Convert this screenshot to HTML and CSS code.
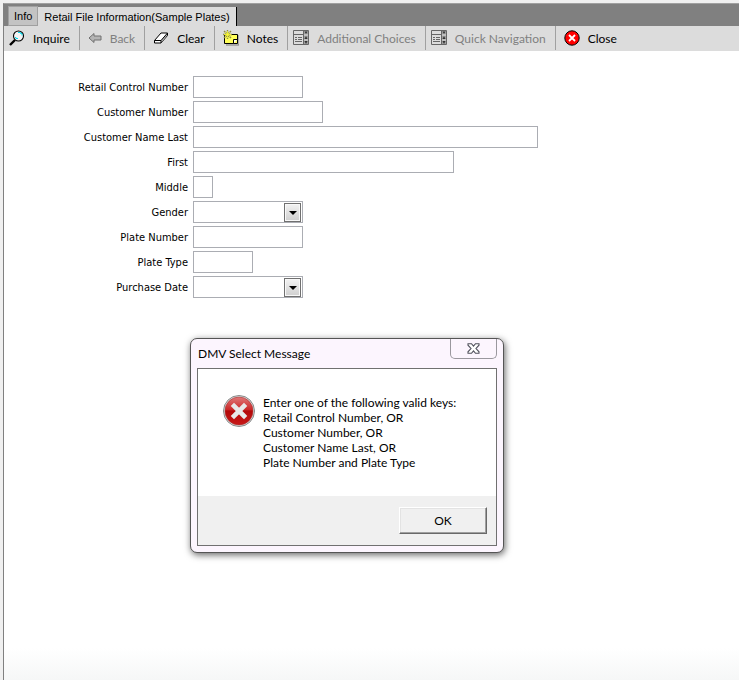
FILE: index.html
```
<!DOCTYPE html>
<html lang="en">
<head>
    <meta charset="UTF-8">
    <meta name="viewport" content="width=device-width, initial-scale=1.0">
    <title>Retail File Information</title>
    <link rel="stylesheet" href="styles.css">
</head>
<body>
    <div class="window">
        <div class="tabs" role="tablist">
            <button class="tab" type="button" role="tab">Info</button>
            <button class="tab tab-active" type="button" role="tab" aria-selected="true">Retail File Information(Sample Plates)</button>
        </div>

        <div class="toolbar">
            <button class="tool tool-inquire" type="button">
                <svg width="16" height="16" viewBox="0 0 16 16">
                    <path d="M6 10L1 15" stroke="#000" stroke-width="2.4"/>
                    <circle cx="9.5" cy="6" r="5" fill="#f4f4f4" stroke="#000" stroke-width="1.1"/>
                    <path d="M9 2.500h2.500v1H13v2M6 7.500h1v1h2" fill="none" stroke="#00dcf0"/>
                </svg>
                Inquire
            </button>
            <button class="tool tool-back" type="button" disabled>
                <svg width="14" height="16" viewBox="0 0 14 16">
                    <path d="M1 8l5-4.5V6h7v4H6v2.500z" fill="#b4b4b4" stroke="#707070"/>
                </svg>
                Back
            </button>
            <button class="tool" type="button">
                <svg width="16" height="16" viewBox="0 0 16 16">
                    <path d="M1.500 10.500L8 3h6.500v2.500L8 13H1.500z" fill="#fff" stroke="#000"/>
                    <path d="M8 10.500L14 3.500v2L8 13z" fill="#aaa"/>
                    <path d="M1.500 10.500H8L14.500 3M8 10.500V13" fill="none" stroke="#000"/>
                </svg>
                Clear
            </button>
            <button class="tool" type="button">
                <svg width="16" height="16" viewBox="0 0 16 16">
                    <path d="M3 15h13V5" fill="none" stroke="#777"/>
                    <path d="M1.500 4.500h13v9h-13z" fill="#ffff58" stroke="#000"/>
                    <path d="M10.500 13.500v-4h4" fill="#fff" stroke="#000"/>
                    <path d="M4.500 0v9M0 4.500h9M1 1l7 7M8 1L1 8" stroke="#8d8d48" stroke-width="1.4"/>
                    <path d="M4.500 1v7M1 4.500h7M2 2l5 5M7 2L2 7" stroke="#ff3" stroke-width=".8"/>
                </svg>
                Notes
            </button>
            <button class="tool tool-list" type="button" disabled>
                <svg width="16" height="16" viewBox="0 0 16 16">
                    <path d="M.5 .5h15v14H.5zM10.500 0v15M.5 4.500h10M2 7.500h2M5 7.500h4M2 9.500h2M5 9.500h4M2 11.500h7" fill="none" stroke="#666"/>
                    <path d="M11 1h4v13h-4z" fill="#a0a0a0"/>
                    <path d="M11 5h4M11 10h4" stroke="#ddd"/>
                    <path d="M11.500 1.500h3L13 4zM11.500 9h3L13 6zM11.500 11h3L13 14z" fill="#333"/>
                </svg>
                Additional Choices
            </button>
            <button class="tool tool-list" type="button" disabled>
                <svg width="16" height="16" viewBox="0 0 16 16">
                    <path d="M.5 .5h15v14H.5zM10.500 0v15M.5 4.500h10M2 7.500h2M5 7.500h4M2 9.500h2M5 9.500h4M2 11.500h7" fill="none" stroke="#666"/>
                    <path d="M11 1h4v13h-4z" fill="#a0a0a0"/>
                    <path d="M11 5h4M11 10h4" stroke="#ddd"/>
                    <path d="M11.500 1.500h3L13 4zM11.500 9h3L13 6zM11.500 11h3L13 14z" fill="#333"/>
                </svg>
                Quick Navigation
            </button>
            <button class="tool tool-close" type="button">
                <svg width="16" height="16" viewBox="0 0 16 16">
                    <circle cx="8" cy="8" r="7.200" fill="#f00" stroke="#000"/>
                    <path d="M5 5l6 6M11 5l-6 6" stroke="#fff" stroke-width="1.800"/>
                </svg>
                Close
            </button>
        </div>

        <form class="search-form">
            <div class="row">
                <label for="control-number">Retail Control Number</label>
                <input id="control-number" class="field" type="text">
            </div>
            <div class="row">
                <label for="customer-number">Customer Number</label>
                <input id="customer-number" class="field field-customer" type="text">
            </div>
            <div class="row">
                <label for="last-name">Customer Name Last</label>
                <input id="last-name" class="field field-last" type="text">
            </div>
            <div class="row">
                <label for="first-name">First</label>
                <input id="first-name" class="field field-first" type="text">
            </div>
            <div class="row">
                <label for="middle">Middle</label>
                <input id="middle" class="field field-middle" type="text" maxlength="1">
            </div>
            <div class="row">
                <label for="gender">Gender</label>
                <div class="dropdown">
                    <select id="gender" class="field"><option value=""></option></select>
                    <span class="arrow"></span>
                </div>
            </div>
            <div class="row">
                <label for="plate-number">Plate Number</label>
                <input id="plate-number" class="field" type="text">
            </div>
            <div class="row">
                <label for="plate-type">Plate Type</label>
                <input id="plate-type" class="field field-type" type="text">
            </div>
            <div class="row">
                <label for="purchase-date">Purchase Date</label>
                <div class="dropdown">
                    <select id="purchase-date" class="field"><option value=""></option></select>
                    <span class="arrow"></span>
                </div>
            </div>
        </form>
    </div>

    <div class="dialog" role="alertdialog" aria-labelledby="dialog-title">
        <div class="dialog-header">
            <span id="dialog-title">DMV Select Message</span>
            <button class="dialog-close" type="button" aria-label="Close">
                <svg width="13" height="11" viewBox="0 0 13 11">
                    <path d="M1 .7h3.500l2 2.400 2-2.400H12v1.500L9 5.500l3 3.300v1.500H8.500l-2-2.400-2 2.400H1V8.800l3-3.300-3-3.300z" fill="#fff" stroke="#50505c" stroke-width="1.100"/>
                </svg>
            </button>
        </div>
        <div class="dialog-body">
            <div class="message">
                <svg width="32" height="32" viewBox="0 0 32 32">
                    <defs>
                        <linearGradient id="red" x1="0" y1="0" x2="0" y2="1">
                            <stop offset="0" stop-color="#e07878"/>
                            <stop offset=".45" stop-color="#cc2828"/>
                            <stop offset=".5" stop-color="#b30808"/>
                            <stop offset="1" stop-color="#c81818"/>
                        </linearGradient>
                    </defs>
                    <circle cx="16" cy="16" r="15.500" fill="#ddd" stroke="#888"/>
                    <circle cx="16" cy="16" r="14" fill="url(#red)" stroke="#a33" stroke-width=".6"/>
                    <path d="M11 11l10 10M21 11L11 21" stroke="#e8e8e8" stroke-width="4.600" stroke-linecap="square"/>
                </svg>
                <p>Enter one of the following valid keys:<br>
                Retail Control Number, OR<br>
                Customer Number, OR<br>
                Customer Name Last, OR<br>
                Plate Number and Plate Type</p>
            </div>
            <div class="dialog-footer">
                <button class="ok-button" type="button">OK</button>
            </div>
        </div>
    </div>
</body>
</html>
```
FILE: styles.css
```
* {
    box-sizing: border-box;
}
body {
    margin: 0;
    padding: 3px 0 0 3px;
    background: #f0f0f0;
    color: #000;
    font-family: Lato, "Open Sans", sans-serif;
    font-size: 12px;
}
button {
    font: inherit;
    color: inherit;
    margin: 0;
}
.window {
    min-height: calc(100vh - 3px);
    border-top: 1px solid #a0a0a0;
    border-left: 1px solid #808080;
    background: linear-gradient(to top, #f6f7f7, #fff 32px);
}
.tabs {
    display: flex;
    align-items: flex-end;
    height: 22px;
    padding-left: 4px;
    background: #808080;
}
.tab {
    height: 20px;
    padding: 0 5px;
    border: 1px solid #a0a0a0;
    background: #c3c3c3;
    font-family: "Liberation Sans", Arial, sans-serif;
    font-size: 11px;
    line-height: 18px;
}
.tab-active {
    height: 19px;
    padding: 0 6px;
    border: none;
    border-right: 1px solid #000;
    background: #dcdcdc;
}
.toolbar {
    display: flex;
    height: 25px;
    padding-bottom: 1px;
    background: #dcdcdc;
}
.tool {
    display: flex;
    align-items: center;
    gap: 8px;
    padding: 0 9px 0 8px;
    border: none;
    border-right: 1px solid #a0a0a0;
    background: none;
    white-space: nowrap;
}
.tool:disabled {
    color: #808080;
}
.tool-inquire,
.tool-list {
    padding-left: 5px;
}
.tool-close {
    border-right: none;
}
.search-form {
    display: flex;
    flex-direction: column;
    gap: 3px;
    padding: 25px 0 25px 12px;
}
.row {
    display: flex;
    align-items: center;
    gap: 5px;
}
.row label {
    width: 172px;
    text-align: right;
    font-family: "DejaVu Sans Condensed", "DejaVu Sans", sans-serif;
    font-size: 11px;
}
.field {
    display: block;
    width: 110px;
    height: 22px;
    border: 1px solid #abadb3;
    border-radius: 0;
    background: #fff;
    outline: none;
    appearance: none;
}
.field-customer {
    width: 130px;
}
.field-last {
    width: 345px;
}
.field-first {
    width: 261px;
}
.field-middle {
    width: 20px;
}
.field-type {
    width: 60px;
}
.dropdown {
    position: relative;
}
.arrow {
    position: absolute;
    top: 2px;
    right: 2px;
    display: flex;
    align-items: center;
    justify-content: center;
    width: 17px;
    height: 19px;
    border: 1px solid #707070;
    background: linear-gradient(#f2f2f2, #cfcfcf);
    box-shadow: inset 0 0 0 1px #f8f8f8;
    pointer-events: none;
}
.arrow::before {
    content: "";
    border: 4px solid transparent;
    border-top-color: #000;
    border-bottom: none;
}
.dialog {
    position: absolute;
    top: 338px;
    left: 190px;
    width: 314px;
    padding: 0 6px 6px;
    border: 1px solid #555;
    border-radius: 7px;
    background: #fcf5fe;
    box-shadow: 1px 2px 7px rgba(0, 0, 0, 0.6);
}
.dialog-header {
    display: flex;
    align-items: center;
    justify-content: space-between;
    height: 29px;
    padding-left: 1px;
}
.dialog-close {
    display: flex;
    align-items: center;
    justify-content: center;
    align-self: flex-start;
    width: 47px;
    height: 20px;
    padding: 0;
    border: 1px solid #9a979e;
    border-top: none;
    border-radius: 0 0 5px 5px;
    background: none;
}
.dialog-body {
    border: 1px solid #707070;
    background: #fff;
}
.message {
    display: flex;
    gap: 8px;
    padding: 26px 25px;
}
.message p {
    margin: 0;
    line-height: 15px;
}
.dialog-footer {
    display: flex;
    justify-content: flex-end;
    padding: 11px 9px;
    background: #f0f0f0;
}
.ok-button {
    width: 88px;
    height: 27px;
    border: 1px solid;
    border-color: #fff #696969 #696969 #fff;
    background: #f0f0f0;
    box-shadow: inset -1px -1px #a0a0a0, inset 1px 1px #e3e3e3;
}
```
